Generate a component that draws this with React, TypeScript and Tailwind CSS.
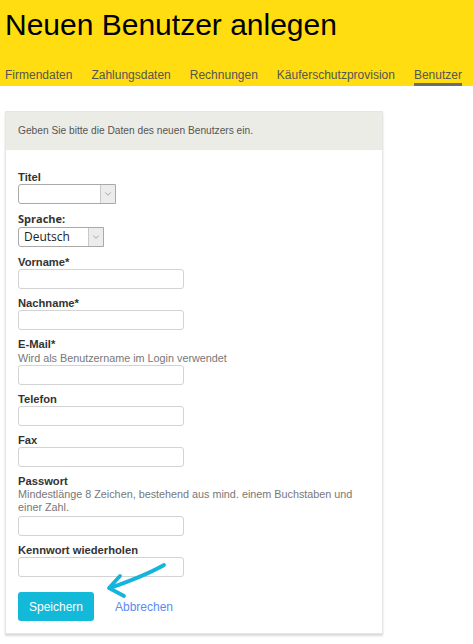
import { ChevronDown } from 'lucide-react'

const tabs = ['Firmendaten', 'Zahlungsdaten', 'Rechnungen', 'Käuferschutzprovision', 'Benutzer']

const Label = ({ children }: { children: React.ReactNode }) => (
  <div className="text-[11.2px] leading-[14px] font-bold text-[#333]">{children}</div>
)

const Hint = ({ children }: { children: React.ReactNode }) => (
  <div className="text-[10.8px] leading-[13px] text-[#777]">{children}</div>
)

const TextInput = () => (
  <input type="text" className="block w-[166px] h-[20px] rounded-[3px] border border-[#d3d3d3] bg-white px-1 text-[12px] outline-none" />
)

const FakeSelect = ({ value, width }: { value?: string; width: string }) => (
  <div className={`flex h-[20px] ${width} rounded-l-[3px] border border-[#a9a9a9] bg-white`}>
    <div className="flex-1 px-[5px] text-[12px] leading-[18px] text-[#222] font-['Open_Sans',sans-serif]">{value}</div>
    <div className="flex w-[15px] items-center justify-center border-l border-[#c8c8c8] bg-[#ececec]">
      <ChevronDown className="w-[10px] h-[10px] text-[#777]" strokeWidth={1.5} />
    </div>
  </div>
)

export default function App() {
  return (
    <div className="min-h-[644px] bg-white font-['Liberation_Sans',Arial,sans-serif]">
      <div className="h-[86px] bg-[#ffdd11] px-[5px] pt-[10px]">
        <h1 className="text-[30px] leading-none text-black">Neuen Benutzer anlegen</h1>
        <div className="mt-[28px] flex gap-[19px] text-[12px] text-[#555]">
          {tabs.map((t) => (
            <div
              key={t}
              className={t === 'Benutzer' ? 'h-[18px] leading-[15px] border-b-[3px] border-[#6b6b6b]' : 'h-[18px] leading-[15px]'}
            >
              {t}
            </div>
          ))}
        </div>
      </div>

      <div className="relative ml-[5px] mt-[25px] w-[378px] border border-[#e6e6e6] bg-white shadow-[0_2px_2px_rgba(0,0,0,0.15)]">
        <div className="flex h-[38px] items-center bg-[#ececE6] px-[12px] text-[10.2px] text-[#555]">
          Geben Sie bitte die Daten des neuen Benutzers ein.
        </div>

        <div className="px-[12px] pt-[20px] pb-[12px]">
          <Label>Titel</Label>
          <FakeSelect width="w-[98px]" />

          <div className="mt-[7px] text-[11px] leading-[16px] font-bold text-[#333] font-['Open_Sans',sans-serif]">Sprache:</div>
          <FakeSelect value="Deutsch" width="w-[86px]" />

          <div className="mt-[8px]">
            <Label>Vorname*</Label>
            <TextInput />
          </div>
          <div className="mt-[7px]">
            <Label>Nachname*</Label>
            <TextInput />
          </div>
          <div className="mt-[7px]">
            <Label>E-Mail*</Label>
            <div className="text-[10.8px] leading-[14px] text-[#777]">Wird als Benutzername im Login verwendet</div>
            <TextInput />
          </div>
          <div className="mt-[7px]">
            <Label>Telefon</Label>
            <TextInput />
          </div>
          <div className="mt-[7px]">
            <Label>Fax</Label>
            <TextInput />
          </div>
          <div className="mt-[7px]">
            <Label>Passwort</Label>
            <div className="pr-[10px] mb-[2px]">
              <Hint>Mindestlänge 8 Zeichen, bestehend aus mind. einem Buchstaben und einer Zahl.</Hint>
            </div>
            <TextInput />
          </div>
          <div className="mt-[7px]">
            <Label>Kennwort wiederholen</Label>
            <TextInput />
          </div>

          <div className="mt-[15px] flex items-center gap-[21px]">
            <button className="h-[29px] w-[76px] rounded-[3px] bg-[#12b9d9] text-[12px] text-white">Speichern</button>
            <a className="text-[12px] text-[#5b8cf0]">Abbrechen</a>
          </div>
        </div>

        <svg className="absolute left-[94px] top-[447px]" width="70" height="45" viewBox="0 0 70 45" fill="none">
          <path d="M64 6 C 50 14, 30 22, 10 29" stroke="#14b4dc" strokeWidth="3.8" strokeLinecap="round" />
          <path d="M20 17 L 9 29 L 24 37" stroke="#14b4dc" strokeWidth="3.8" strokeLinecap="round" strokeLinejoin="round" />
        </svg>
      </div>
    </div>
  )
}
